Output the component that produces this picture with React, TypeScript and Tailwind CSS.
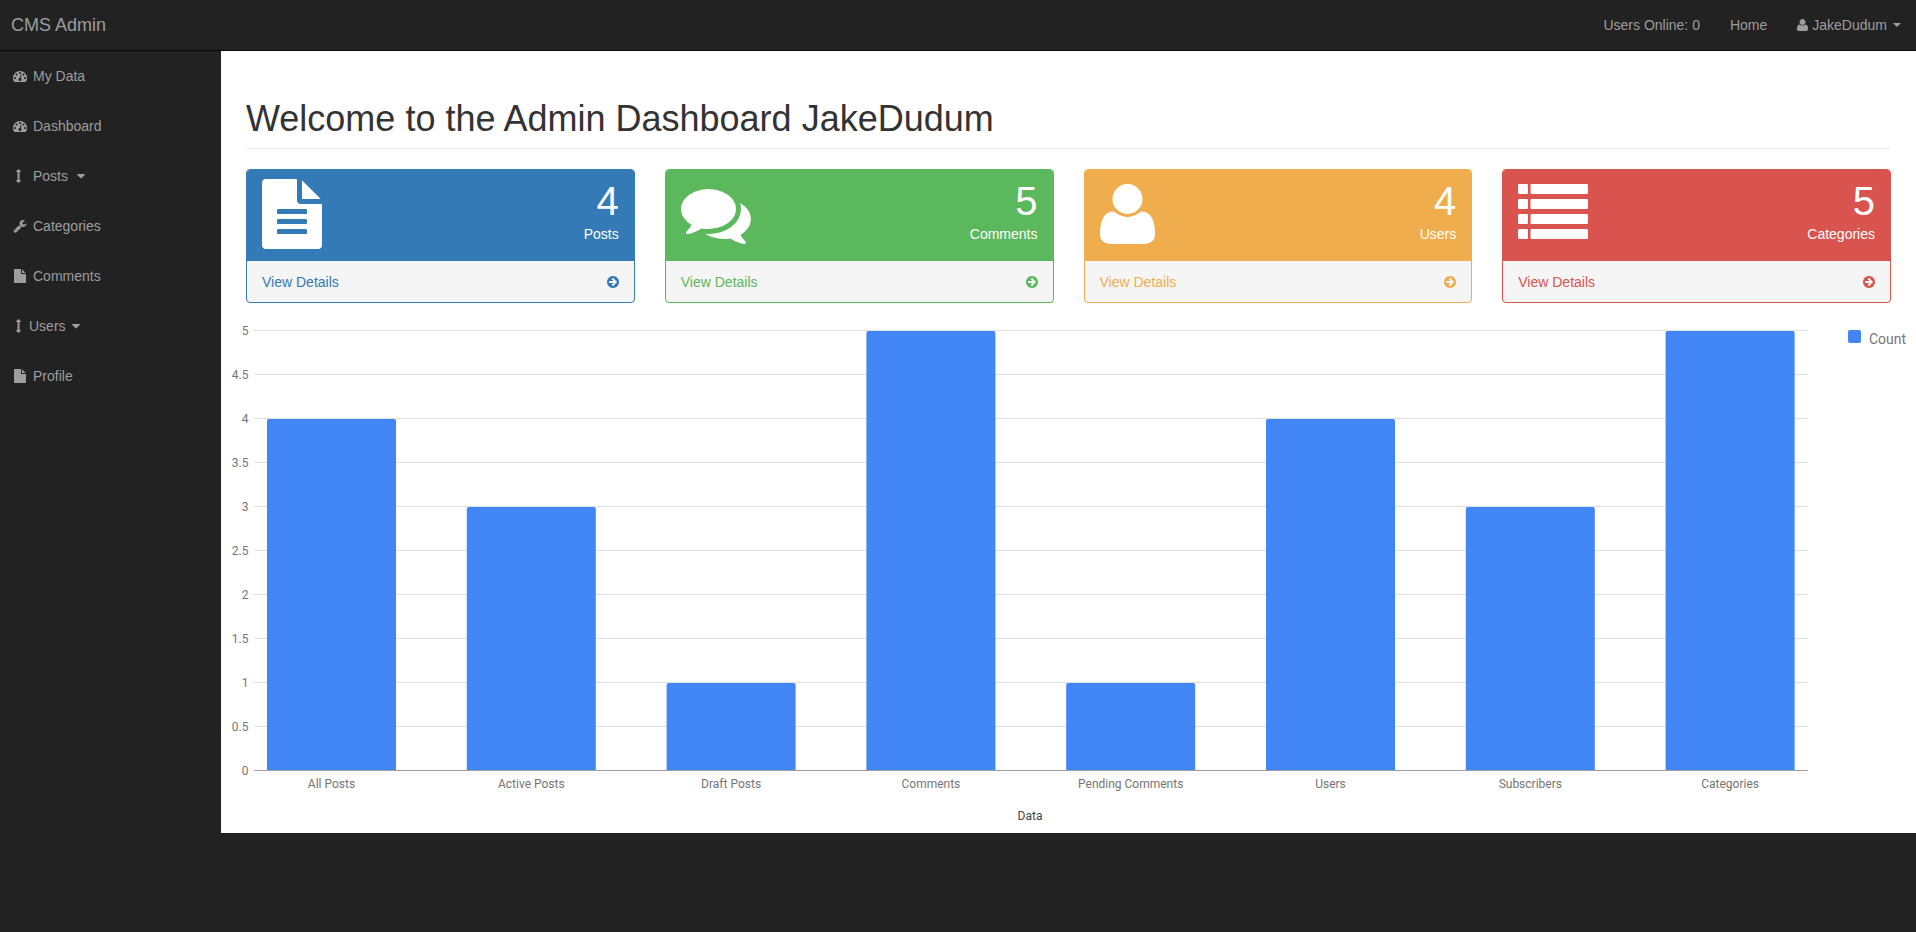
const sans = "font-['Liberation_Sans',Arial,sans-serif]";

const paths = {
  dashboard:
    "M384 1152q0-53-37.5-90.5t-90.5-37.5-90.5 37.5-37.5 90.5 37.5 90.5 90.5 37.5 90.5-37.5 37.5-90.5zm192-448q0-53-37.5-90.5t-90.5-37.5-90.5 37.5-37.5 90.5 37.5 90.5 90.5 37.5 90.5-37.5 37.5-90.5zm428 481l101-382q6-26-7.5-48.5t-38.5-29.5-48 6.5-30 39.5l-101 382q-60 5-107 43.5t-63 98.5q-20 77 20 146t117 89 146-20 89-117q16-60-6-117t-72-91zm660-33q0-53-37.5-90.5t-90.5-37.5-90.5 37.5-37.5 90.5 37.5 90.5 90.5 37.5 90.5-37.5 37.5-90.5zm-640-640q0-53-37.5-90.5t-90.5-37.5-90.5 37.5-37.5 90.5 37.5 90.5 90.5 37.5 90.5-37.5 37.5-90.5zm448 192q0-53-37.5-90.5t-90.5-37.5-90.5 37.5-37.5 90.5 37.5 90.5 90.5 37.5 90.5-37.5 37.5-90.5zm320 448q0 261-141 483-19 29-54 29h-1402q-35 0-54-29-141-221-141-483 0-182 71-348t191-286 286-191 348-71 348 71 286 191 191 286 71 348z",
  arrowsV:
    "M1024 320q0 26-19 45t-45 19h-128v1024h128q26 0 45 19t19 45-19 45l-256 256q-19 19-45 19t-45-19l-256-256q-19-19-19-45t19-45 45-19h128v-1024h-128q-26 0-45-19t-19-45 19-45l256-256q19-19 45-19t45 19l256 256q19 19 19 45z",
  wrench:
    "M448 1472q0-26-19-45t-45-19-45 19-19 45 19 45 45 19 45-19 19-45zm644-420l-682 682q-37 37-90 37-52 0-91-37l-106-108q-38-36-38-90 0-53 38-91l681-681q39 98 114.5 173.5t173.5 114.5zm634-435q0 39-23 106-47 134-164.5 217.5t-258.5 83.5q-185 0-316.5-131.5t-131.5-316.5 131.5-316.5 316.5-131.5q58 0 121.5 16.5t107.5 46.5q16 11 16 28t-16 28l-293 169v224l193 106q5-3 79-48.5t135.5-81 70.5-35.5q15 0 23.5 10t8.5 25z",
  file: "M1152 512v-472q22 14 36 28l408 408q14 14 28 36h-472zm-128 32q0 40 28 68t68 28h544v1056q0 40-28 68t-68 28h-1344q-40 0-68-28t-28-68v-1600q0-40 28-68t68-28h800v544z",
  fileText:
    "M1596 476q14 14 28 36h-472v-472q22 14 36 28zm-476 164h544v1056q0 40-28 68t-68 28h-1344q-40 0-68-28t-28-68v-1600q0-40 28-68t68-28h800v544q0 40 28 68t68 28zm160 736v-64q0-14-9-23t-23-9h-704q-14 0-23 9t-9 23v64q0 14 9 23t23 9h704q14 0 23-9t9-23zm0-256v-64q0-14-9-23t-23-9h-704q-14 0-23 9t-9 23v64q0 14 9 23t23 9h704q14 0 23-9t9-23zm0-256v-64q0-14-9-23t-23-9h-704q-14 0-23 9t-9 23v64q0 14 9 23t23 9h704q14 0 23-9t9-23z",
  comments:
    "M1408 768q0 139-94 257t-256.5 186.5-353.5 68.5q-86 0-176-16-124 88-278 128-36 9-86 16h-3q-11 0-20.5-8t-11.5-21q-1-3-1-6.5t.5-6.5 2-6l2.5-5 3.5-5.5 4-5 4.5-5 4-4.5q5-6 23-25t26-29.5 22.5-29 25-38.5 20.5-44q-124-72-195-177t-71-224q0-139 94-257t256.5-186.5 353.5-68.5 353.5 68.5 256.5 186.5 94 257zm384 256q0 120-71 224.5t-195 176.5q10 24 20.5 44t25 38.5 22.5 29 26 29.5 23 25q1 1 4 4.5t4.5 5 4 5 3.5 5.5l2.5 5 2 6 .5 6.5-1 6.5q-3 14-13 22t-22 7q-50-7-86-16-154-40-278-128-90 16-176 16-271 0-472-132 58 4 88 4 161 0 309-45t264-129q125-92 192-212t67-254q0-77-23-152 129 71 204 178t75 230z",
  user: "M1600 1405q0 120-73 189.5t-194 69.5h-874q-121 0-194-69.5t-73-189.5q0-53 3.5-103.5t14-109 26.5-108.5 43-97.5 62-81 85.5-53.5 111.5-20q9 0 42 21.5t74.5 48 108 48 133.5 21.5 133.5-21.5 108-48 74.5-48 42-21.5q61 0 111.5 20t85.5 53.5 62 81 43 97.5 26.5 108.5 14 109 3.5 103.5zm-320-893q0 159-112.5 271.5t-271.5 112.5-271.5-112.5-112.5-271.5 112.5-271.5 271.5-112.5 271.5 112.5 112.5 271.5z",
  list: "M32 128h192q32 0 32 32v192q0 32-32 32h-192q-32 0-32-32v-192q0-32 32-32zm320 0h1408q32 0 32 32v192q0 32-32 32h-1408q-32 0-32-32v-192q0-32 32-32zm-320 384h192q32 0 32 32v192q0 32-32 32h-192q-32 0-32-32v-192q0-32 32-32zm320 0h1408q32 0 32 32v192q0 32-32 32h-1408q-32 0-32-32v-192q0-32 32-32zm-320 384h192q32 0 32 32v192q0 32-32 32h-192q-32 0-32-32v-192q0-32 32-32zm320 0h1408q32 0 32 32v192q0 32-32 32h-1408q-32 0-32-32v-192q0-32 32-32zm-320 384h192q32 0 32 32v192q0 32-32 32h-192q-32 0-32-32v-192q0-32 32-32zm320 0h1408q32 0 32 32v192q0 32-32 32h-1408q-32 0-32-32v-192q0-32 32-32z",
  caret:
    "M1408 704q0 26-19 45l-448 448q-19 19-45 19t-45-19l-448-448q-19-19-19-45t19-45 45-19h896q26 0 45 19t19 45z",
  arrowCircle:
    "M1285 896q0-27-18-45l-91-91-362-362q-18-18-45-18t-45 18l-91 91q-18 18-18 45t18 45l189 189h-502q-26 0-45 19t-19 45v128q0 26 19 45t45 19h502l-189 189q-19 19-19 45t19 45l91 91q18 18 45 18t45-18l362-362 91-91q18-18 18-45zm251 0q0 209-103 385.5t-279.5 279.5-385.5 103-385.5-103-279.5-279.5-103-385.5 103-385.5 279.5-279.5 385.5-103 385.5 103 279.5 279.5 103 385.5z",
};

function Icon({
  d,
  box = "0 0 1792 1792",
  className,
}: {
  d: string;
  box?: string;
  className?: string;
}) {
  return (
    <svg viewBox={box} className={className} fill="currentColor">
      <path d={d} />
    </svg>
  );
}

const navItems = [
  { label: "My Data", icon: paths.dashboard },
  { label: "Dashboard", icon: paths.dashboard },
  { label: "Posts", icon: paths.arrowsV, caret: "ml-[9px]" },
  { label: "Categories", icon: paths.wrench },
  { label: "Comments", icon: paths.file },
  { label: "Users", icon: paths.arrowsV, caret: "ml-[6px]", tight: true },
  { label: "Profile", icon: paths.file },
];

const cards = [
  {
    count: 4,
    label: "Posts",
    head: "bg-[#337ab7]",
    border: "border-[#337ab7]",
    text: "text-[#337ab7]",
    icon: <Icon d={paths.fileText} box="128 0 1536 1792" className="w-[60px] h-[70px]" />,
  },
  {
    count: 5,
    label: "Comments",
    head: "bg-[#5cb85c]",
    border: "border-[#5cb85c]",
    text: "text-[#5cb85c]",
    icon: <Icon d={paths.comments} className="w-[70px] h-[70px]" />,
  },
  {
    count: 4,
    label: "Users",
    head: "bg-[#f0ad4e]",
    border: "border-[#f0ad4e]",
    text: "text-[#f0ad4e]",
    icon: <Icon d={paths.user} box="192 0 1408 1792" className="w-[55px] h-[70px]" />,
  },
  {
    count: 5,
    label: "Categories",
    head: "bg-[#d9534f]",
    border: "border-[#d9534f]",
    text: "text-[#d9534f]",
    icon: <Icon d={paths.list} className="w-[70px] h-[70px]" />,
  },
];

const chartData = [
  { label: "All Posts", value: 4 },
  { label: "Active Posts", value: 3 },
  { label: "Draft Posts", value: 1 },
  { label: "Comments", value: 5 },
  { label: "Pending Comments", value: 1 },
  { label: "Users", value: 4 },
  { label: "Subscribers", value: 3 },
  { label: "Categories", value: 5 },
];

const ticks = [0, 0.5, 1, 1.5, 2, 2.5, 3, 3.5, 4, 4.5, 5];

function Chart() {
  const y0 = 770.5;
  return (
    <svg
      viewBox="221 303 1695 530"
      className="block w-[1695px] h-[530px] font-['Roboto',sans-serif] text-[12px]"
    >
      {ticks.map((t) => {
        const y = y0 - t * 88;
        return (
          <g key={t}>
            <line
              x1={254}
              x2={1808}
              y1={y}
              y2={y}
              stroke={t === 0 ? "#9e9e9e" : "#e0e0e0"}
              strokeWidth={1}
            />
            <text x={248.5} y={y + 4} textAnchor="end" fill="#757575">
              {t}
            </text>
          </g>
        );
      })}
      {chartData.map((d, i) => {
        const x = 267 + i * 199.8;
        const h = d.value * 88 - 1;
        return (
          <g key={d.label}>
            <path
              d={`M${x} ${y0 - 0.5}v${-h + 2}q0 -2 2 -2h125q2 0 2 2v${h - 2}z`}
              fill="#4285f4"
            />
            <text x={x + 64.5} y={788} textAnchor="middle" fill="#757575">
              {d.label}
            </text>
          </g>
        );
      })}
      <text x={1030} y={820} textAnchor="middle" fill="#424242">
        Data
      </text>
      <rect x={1848} y={330} width={13} height={13} rx={2} fill="#4285f4" />
      <text x={1869} y={344} fill="#757575" fontSize={14}>
        Count
      </text>
    </svg>
  );
}

export default function App() {
  return (
    <div className={`h-screen overflow-hidden bg-[#222222] text-[14px] ${sans}`}>
      <nav className="h-[51px] border-b border-[#080808] flex items-center justify-between text-[#9d9d9d]">
        <span className="pl-[11px] text-[18px]">CMS Admin</span>
        <div className="flex items-center pr-[15px]">
          <span>Users Online: 0</span>
          <span className="ml-[30px]">Home</span>
          <span className="ml-[30px] flex items-center">
            <Icon d={paths.user} box="192 0 1408 1792" className="w-[11px] h-[14px] mr-[4px]" />
            JakeDudum
            <span className="ml-[6px] border-x-[4px] border-x-transparent border-t-[4px] border-t-[#9d9d9d]" />
          </span>
        </div>
      </nav>

      <div className="flex">
        <aside className="w-[221px] shrink-0 text-[#9d9d9d]">
          {navItems.map((item) => (
            <div key={item.label} className="h-[50px] pl-[11px] flex items-center">
              <span className="w-[18px] flex justify-center">
                <Icon d={item.icon} className="w-[14px] h-[14px]" />
              </span>
              <span className={item.tight ? "" : "ml-[4px]"}>{item.label}</span>
              {item.caret && (
                <Icon
                  d={paths.caret}
                  box="384 0 1024 1792"
                  className={`w-[8px] h-[14px] ${item.caret}`}
                />
              )}
            </div>
          ))}
        </aside>

        <main className="flex-1 h-[782px] bg-white">
          <div className="px-[25px] pt-[48px]">
            <h1 className="text-[36px] leading-[40px] text-[#333333] pb-[9px] border-b border-[#eeeeee] mb-[20px]">
              Welcome to the Admin Dashboard JakeDudum
            </h1>
            <div className="grid grid-cols-4 gap-[30px]">
              {cards.map((c) => (
                <div
                  key={c.label}
                  className={`h-[134px] border rounded-[4px] bg-[#f5f5f5] ${c.border} ${c.text}`}
                >
                  <div
                    className={`h-[91px] pt-[9px] px-[15px] rounded-t-[3px] flex justify-between text-white ${c.head}`}
                  >
                    {c.icon}
                    <div className="text-right">
                      <div className="text-[40px] leading-[45px]">{c.count}</div>
                      <div className="leading-[20px]">{c.label}</div>
                    </div>
                  </div>
                  <div className="h-[41px] pt-px px-[15px] flex items-center justify-between">
                    <span>View Details</span>
                    <Icon d={paths.arrowCircle} box="0 0 1536 1792" className="w-[12px] h-[14px]" />
                  </div>
                </div>
              ))}
            </div>
          </div>
          <Chart />
        </main>
      </div>
    </div>
  );
}
